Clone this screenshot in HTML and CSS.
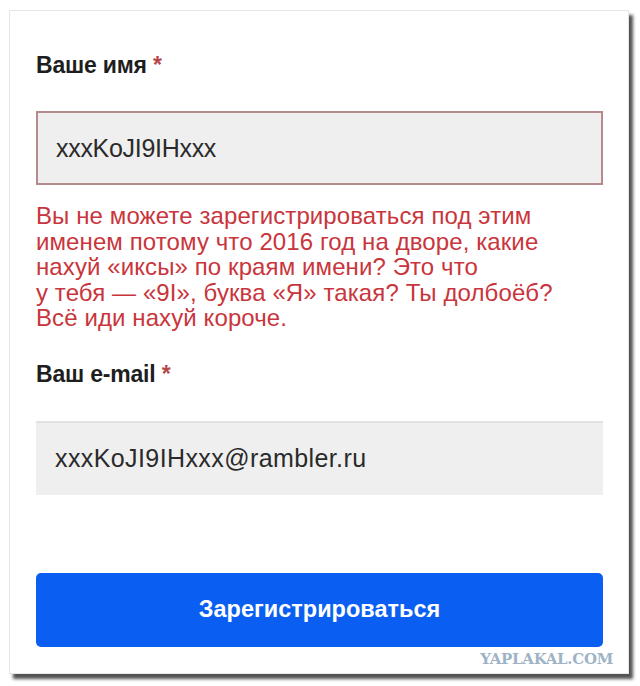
FILE: index.html
```html
<!DOCTYPE html>
<html lang="ru">
<head>
<meta charset="utf-8">
<link rel="stylesheet" href="styles.css">
</head>
<body>
<div class="card">
  <form class="form">
    <div class="label">Ваше имя <span class="req">*</span></div>
    <div class="input input-error">xxxKoJI9IHxxx</div>
    <div class="error">Вы не можете зарегистрироваться под этим<br>именем потому что 2016 год на дворе, какие<br>нахуй «иксы» по краям имени? Это что<br>у тебя — «9I», буква «Я» такая? Ты долбоёб?<br>Всё иди нахуй короче.</div>
    <div class="label label-email">Ваш e-mail <span class="req">*</span></div>
    <div class="input input-email">xxxKoJI9IHxxx@rambler.ru</div>
    <div class="button">Зарегистрироваться</div>
    <div class="watermark">YAPLAKAL.COM</div>
  </form>
</div>
</body>
</html>
```
FILE: styles.css
```css
html, body {
  margin: 0;
  padding: 0;
  background: #ffffff;
}
body {
  width: 640px;
  height: 686px;
  overflow: hidden;
  font-family: "Liberation Sans", Arial, sans-serif;
}
.card {
  margin: 10px 0 0 9px;
  width: 618px;
  height: 662px;
  background: #ffffff;
  border: 1px solid #e6e6e6;
  box-shadow: 4px 5px 3px rgba(40, 40, 40, 0.8);
}
.form {
  display: flex;
  flex-direction: column;
  padding: 41px 25px 0 26px;
}
.label {
  font-size: 23px;
  line-height: 26px;
  font-weight: bold;
  color: #1e1e1e;
  letter-spacing: -0.2px;
}
.req {
  color: #b5474b;
}
.input {
  margin-top: 33px;
  box-sizing: border-box;
  height: 74px;
  padding-left: 19px;
  display: flex;
  align-items: center;
  font-size: 25px;
  color: #2a2a2a;
  background: #efefef;
  letter-spacing: -0.3px;
}
.input-error {
  border: 2px solid #b58a8c;
  padding-left: 18px;
}
.input-email {
  margin-top: 34px;
  border-top: 2px solid #e2e2e2;
  letter-spacing: 0.4px;
}
.error {
  margin-top: 18px;
  font-size: 24px;
  line-height: 25.5px;
  color: #c9353c;
  letter-spacing: 0.1px;
}
.label-email {
  margin-top: 30px;
}
.button {
  margin-top: 78px;
  height: 74px;
  border-radius: 5px;
  background: #0a5ff2;
  color: #ffffff;
  font-size: 23.5px;
  font-weight: bold;
  letter-spacing: 0;
  display: flex;
  align-items: center;
  justify-content: center;
}
.watermark {
  align-self: flex-end;
  margin-right: -10px;
  margin-top: 3px;
  font-family: "DejaVu Serif", serif;
  font-weight: bold;
  font-size: 15px;
  line-height: 18px;
  color: #9fb3c6;
  letter-spacing: -0.3px;
}
```
